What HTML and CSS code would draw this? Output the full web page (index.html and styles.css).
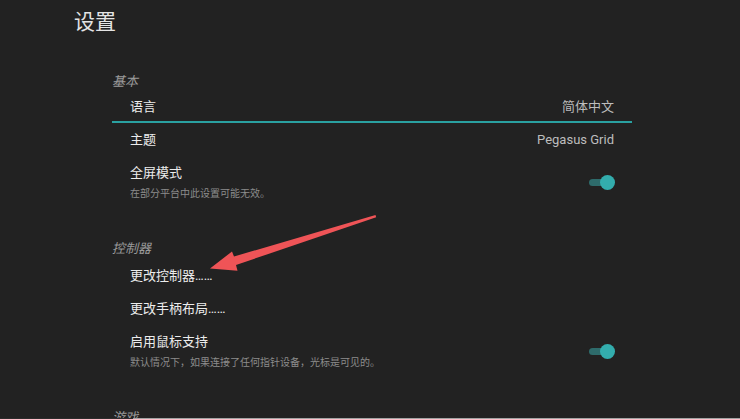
FILE: index.html
```html
<!DOCTYPE html>
<html lang="zh-CN">
<head>
<meta charset="utf-8">
<title>设置</title>
<link rel="stylesheet" href="styles.css">
</head>
<body>
<div class="screen">
  <header class="page-title">设置</header>
  <main class="list">
    <section class="group">
      <h2 class="group-title">基本</h2>
      <div class="row focused">
        <div class="text"><div class="label">语言</div></div>
        <div class="value">简体中文</div>
      </div>
      <div class="row">
        <div class="text"><div class="label">主题</div></div>
        <div class="value">Pegasus Grid</div>
      </div>
      <div class="row two-line">
        <div class="text">
          <div class="label">全屏模式</div>
          <div class="sub">在部分平台中此设置可能无效。</div>
        </div>
        <div class="toggle"><span class="track"></span><span class="knob"></span></div>
      </div>
    </section>
    <section class="group">
      <h2 class="group-title">控制器</h2>
      <div class="row">
        <div class="text"><div class="label">更改控制器……</div></div>
      </div>
      <div class="row">
        <div class="text"><div class="label">更改手柄布局……</div></div>
      </div>
      <div class="row two-line">
        <div class="text">
          <div class="label">启用鼠标支持</div>
          <div class="sub">默认情况下，如果连接了任何指针设备，光标是可见的。</div>
        </div>
        <div class="toggle"><span class="track"></span><span class="knob"></span></div>
      </div>
    </section>
    <section class="group">
      <h2 class="group-title">游戏</h2>
    </section>
  </main>
</div>
<svg class="arrow" width="740" height="419" viewBox="0 0 740 419" aria-hidden="true">
  <polygon points="210,268.5 232,251.5 234,256.5 375.5,215 376.2,217.2 236,265 237.5,270.7" fill="#ef5457"/>
</svg>
<div class="frame-edge"></div>
</body>
</html>
```

FILE: styles.css
```css
html, body {
  margin: 0;
  padding: 0;
  width: 740px;
  height: 419px;
  overflow: hidden;
  background: #222222;
}

body {
  font-family: Roboto, "Noto Sans CJK SC", "Noto Sans", sans-serif;
  color: #e6e6e6;
  position: relative;
}

.screen {
  display: flex;
  flex-direction: column;
}

.page-title {
  height: 44px;
  line-height: 44px;
  font-size: 21px;
  padding-left: 74px;
  color: #e4e4e4;
}

.list {
  margin-left: 112px;
  width: 520px;
  display: flex;
  flex-direction: column;
}

.group {
  display: flex;
  flex-direction: column;
  margin-top: 28px;
}

.group + .group {
  margin-top: 30px;
}

.group-title {
  margin: 0;
  height: 20px;
  line-height: 20px;
  font-size: 13px;
  font-weight: normal;
  font-style: italic;
  color: #9a9a9a;
}

.row {
  display: flex;
  align-items: center;
  justify-content: space-between;
  height: 33px;
  padding: 0 18px 0 18px;
}

.row.focused {
  height: 29px;
  border-bottom: 2px solid #2aa1a1;
}

.row.two-line {
  height: auto;
  padding-top: 8px;
  padding-bottom: 8px;
}

.text {
  display: flex;
  flex-direction: column;
}

.label {
  font-size: 13px;
  line-height: 18px;
  color: #ececec;
}

.sub {
  margin-top: 5px;
  font-size: 10px;
  line-height: 14px;
  color: #8c8c8c;
}

.value {
  font-size: 13px;
  line-height: 18px;
  color: #bdbdbd;
}

.toggle {
  position: relative;
  width: 26px;
  height: 15px;
  margin-right: -1px;
}

.track {
  position: absolute;
  left: 0;
  top: 4px;
  width: 22px;
  height: 7px;
  border-radius: 4px;
  background: #2e6b6b;
}

.knob {
  position: absolute;
  right: 0;
  top: 0;
  width: 15px;
  height: 15px;
  border-radius: 50%;
  background: #33adad;
}

.arrow {
  position: absolute;
  left: 0;
  top: 0;
  pointer-events: none;
}

.frame-edge {
  position: absolute;
  left: 0;
  right: 0;
  bottom: 0;
  height: 1px;
  background: linear-gradient(to right, #2c2c2c 0, #2c2c2c 133px, #a3a3a3 133px, #a3a3a3 100%);
}
```
